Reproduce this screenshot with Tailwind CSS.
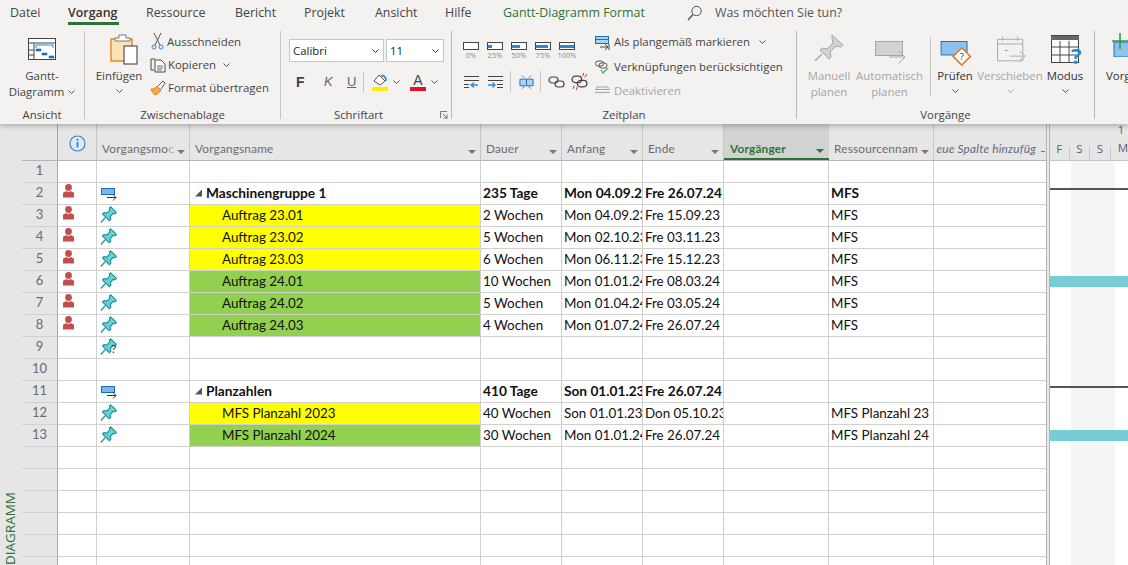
<!DOCTYPE html>
<html lang="de">
<head>
  <meta charset="UTF-8" />
  <title>Gantt-Diagramm</title>
  <script src="https://cdn.jsdelivr.net/npm/@tailwindcss/browser@4"></script>
</head>
<body class="w-[1128px] h-[565px] overflow-hidden bg-white text-[#444] font-['Open_Sans','Noto_Sans',sans-serif] text-[11.4px]">

  <!-- Ribbon tabs -->
  <div class="h-[124px] bg-[#f3f2f1] shadow-[0_2px_5px_rgba(0,0,0,0.25)] relative z-10">
    <nav class="h-[26px] flex text-[12.4px] text-[#444] leading-[26px]">
      <span class="ml-[10px] w-[58px]">Datei</span>
      <span class="w-[78px] relative"><span class="font-semibold text-[#333]">Vorgang</span><span class="absolute left-0 w-[51px] top-[22px] h-[3px] bg-[#2e7237]"></span></span>
      <span class="w-[89px]">Ressource</span>
      <span class="w-[69px]">Bericht</span>
      <span class="w-[71px]">Projekt</span>
      <span class="w-[70px]">Ansicht</span>
      <span class="w-[58px]">Hilfe</span>
      <span class="w-[184px] text-[#2e7237]">Gantt-Diagramm Format</span>
      <svg class="mt-[5px] w-[16px] h-[16px] mr-[12px]" viewBox="0 0 16 16" fill="none" stroke="#555" stroke-width="1"><circle cx="9.5" cy="6" r="4.7"/><path d="M6 9.5 1 15" stroke-width="1.4"/></svg>
      <span class="text-[#555]">Was möchten Sie tun?</span>
    </nav>

    <!-- Ribbon groups -->
    <div class="flex h-[88px] mt-[5px]">
      <!-- Ansicht -->
      <section class="w-[85px] border-r border-[#c8c6c4] flex flex-col items-center">
        <svg class="mt-[7px] w-[28px] h-[23px]" viewBox="0 0 28 23" fill="none"><rect x=".5" y=".5" width="27" height="21" fill="#fff" stroke="#444"/><path d="M0 5h28M6 5v17M0 12h6M0 17h6" stroke="#444"/><path d="M8 10V7h17v3" stroke="#2b88d8"/><path d="M8 11h5v2H8zM14 15h5v2h-5zM21 18h5v2h-5z" fill="#1e70b5" stroke="#1e70b5" stroke-width=".6"/></svg>
        <div class="mt-[7px] text-center leading-[16px]">Gantt-<br><span class="inline-flex items-center gap-[4px]">Diagramm <svg class="w-[7px] h-[4px]" viewBox="0 0 7 4" fill="none" stroke="#555"><path d="M.5.5l3 3 3-3"/></svg></span></div>
        <div class="mt-auto -mb-[3px] leading-[14px]">Ansicht</div>
      </section>

      <!-- Zwischenablage -->
      <section class="w-[196px] border-r border-[#c8c6c4] flex flex-col">
        <div class="flex flex-1">
          <div class="w-[65px] flex flex-col items-center pl-[3px]">
            <svg class="mt-[3px] ml-[10px] w-[28px] h-[31px]" viewBox="0 0 28 31" fill="none"><path d="M1 5h21v22H1z" fill="#fbe3b8" stroke="#ed8b1e" stroke-width="1.500"/><path d="M5 7h15V4h-4V1H9v3H5z" fill="#fff" stroke="#777"/><rect x="14" y="12" width="13" height="18" fill="#fff" stroke="#333"/></svg>
            <div class="mt-[3px] leading-[16px]">Einfügen</div>
            <svg class="mt-[5px] w-[7px] h-[4px]" viewBox="0 0 7 4" fill="none" stroke="#555"><path d="M.5.5l3 3 3-3"/></svg>
          </div>
          <div class="flex flex-col pt-[2px] gap-[7px] leading-[16px]">
            <div class="flex items-center gap-[2px]"><svg class="w-[15px] h-[17px]" viewBox="0 0 15 17" fill="none" stroke="#555"><path d="M4 0l6 12M11 0 5 12"/><circle cx="4" cy="14" r="2" stroke="#2b88d8"/><circle cx="11" cy="14" r="2" stroke="#2b88d8"/></svg>Ausschneiden</div>
            <div class="flex items-center gap-[2px]"><svg class="w-[16px] h-[16px]" viewBox="0 0 16 16" fill="none" stroke="#444"><path d="M5 2H1v11h3"/><path d="M5 3h6l4 4v8H5z" fill="#fff"/><path d="M7 9h6M7 11h6M7 13h5" stroke-width=".8"/></svg>Kopieren <svg class="ml-[5px] w-[7px] h-[4px]" viewBox="0 0 7 4" fill="none" stroke="#555"><path d="M.5.5l3 3 3-3"/></svg></div>
            <div class="flex items-center gap-[2px]"><svg class="w-[16px] h-[16px]" viewBox="0 0 16 16" fill="none"><path d="M1 9c3 0 5-1 6-3l4 4c-1 2-3 4-6 5-1-1-3-3-4-6z" fill="#f3a64b" stroke="#d97a14" stroke-width=".8"/><path d="M8 6l5-5 2 2-4 6" fill="#fff" stroke="#555"/></svg>Format übertragen</div>
          </div>
        </div>
        <div class="text-center leading-[14px] -mb-[3px]">Zwischenablage</div>
      </section>

      <!-- Schriftart -->
      <section class="w-[171px] border-r border-[#b9b7b5] flex flex-col pl-[8px]">
        <div class="flex gap-[2px] mt-[8px]">
          <div class="w-[95px] h-[23px] bg-white border border-[#c8c6c4] flex items-center justify-between pl-[3px] pr-[4px] text-[#222]">Calibri <svg class="w-[7px] h-[4px]" viewBox="0 0 7 4" fill="none" stroke="#333"><path d="M.5.5l3 3 3-3"/></svg></div>
          <div class="w-[58px] h-[23px] bg-white border border-[#c8c6c4] flex items-center justify-between pl-[3px] pr-[4px] text-[#222]">11 <svg class="w-[7px] h-[4px]" viewBox="0 0 7 4" fill="none" stroke="#333"><path d="M.5.5l3 3 3-3"/></svg></div>
        </div>
        <div class="flex items-center mt-[9px] h-[22px]">
          <span class="w-[24px] pl-[7px] font-bold text-[14px] font-['Liberation_Sans',sans-serif]">F</span>
          <span class="w-[24px] pl-[11px] italic text-[13px] text-[#666] font-['Liberation_Sans',sans-serif]">K</span>
          <span class="w-[26px] pl-[10px] underline text-[13px] text-[#666] font-['Liberation_Sans',sans-serif]">U</span>
          <span class="w-px h-[21px] bg-[#c8c6c4] mr-[8px]"></span>
          <span class="w-[16px] flex flex-col items-center"><svg class="w-[15px] h-[12px]" viewBox="0 0 15 12" fill="none"><path d="M1 7l5-6 6 6-5 4z" stroke="#555" fill="#fff"/><path d="M8 2c2-1 5 0 5 5" stroke="#2b88d8" stroke-width="1.600"/></svg><span class="w-[16px] h-[4px] bg-[#ffee00] mt-[1px]"></span></span>
          <svg class="ml-[5px] w-[7px] h-[4px]" viewBox="0 0 7 4" fill="none" stroke="#555"><path d="M.5.5l3 3 3-3"/></svg>
          <span class="ml-[10px] w-[16px] flex flex-col items-center leading-[12px]"><span class="text-[14px] font-['Liberation_Sans',sans-serif]">A</span><span class="w-[16px] h-[4px] bg-[#e81123] mt-[1px]"></span></span>
          <svg class="ml-[5px] w-[7px] h-[4px]" viewBox="0 0 7 4" fill="none" stroke="#555"><path d="M.5.5l3 3 3-3"/></svg>
        </div>
        <div class="mt-auto -mb-[3px] flex leading-[14px]">
          <span class="flex-1 text-center pr-[12px]">Schriftart</span>
          <svg class="w-[8px] h-[8px] mt-[3px] mr-[3px]" viewBox="0 0 9 9" fill="none" stroke="#666"><path d="M.5 8V.5H8"/><path d="M3 3l5 5M8 4v4H4"/></svg>
        </div>
      </section>

      <!-- Zeitplan -->
      <section class="w-[345px] border-r border-[#b9b7b5] flex flex-col pl-[11px]">
        <div class="flex flex-1">
          <div class="w-[132px] pt-[11px]">
            <div class="flex gap-[8px]" id="percent"></div>
            <div class="flex items-center mt-[11px]">
              <svg class="w-[16px] h-[14px]" viewBox="0 0 16 14" fill="none" stroke="#444"><path d="M1 1.500h15M1 5.500h15M1 9.500h5M1 12.500h5"/><path d="M15 10H8m3-2.500L8 10l3 2.500" stroke="#2b88d8" stroke-width="1.300"/></svg>
              <svg class="ml-[8px] w-[16px] h-[14px]" viewBox="0 0 16 14" fill="none" stroke="#444"><path d="M1 1.500h15M1 5.500h15M10 9.500h6M10 12.500h6"/><path d="M1 10h7M5.500 7.500 8 10l-2.500 2.500" stroke="#2b88d8" stroke-width="1.300"/></svg>
              <span class="ml-[7px] w-px h-[21px] bg-[#c8c6c4]"></span>
              <svg class="ml-[8px] w-[15px] h-[16px]" viewBox="0 0 16 16" fill="none"><path d="M1 5h7v7H1z" fill="#a9d3f2" stroke="#1e70b5"/><path d="M8 5h7v7H8z" fill="#a9d3f2" stroke="#1e70b5"/><path d="M3 1l3 3M13 1l-3 3M3 15l3-2M13 15l-3-2" stroke="#777"/></svg>
              <span class="ml-[6px] w-px h-[21px] bg-[#c8c6c4]"></span>
              <svg class="ml-[7px] w-[17px] h-[12px]" viewBox="0 0 17 12" fill="none" stroke="#444" stroke-width="1.200"><rect x="1" y="1" width="9" height="6" rx="3"/><rect x="7" y="5" width="9" height="6" rx="3"/></svg>
              <svg class="ml-[6px] w-[18px] h-[17px]" viewBox="0 0 17 16" fill="none" stroke="#444" stroke-width="1.200"><rect x="1" y="3" width="9" height="6" rx="3"/><rect x="6" y="7" width="9" height="6" rx="3"/><path d="M12 0l-1 3M15 1l-2 3M2 15l1-3M5 16l1-3" stroke="#e81123" stroke-width=".9"/></svg>
            </div>
          </div>
          <div class="flex flex-col pt-[3px] gap-[8.500px] leading-[16px]">
            <div class="flex items-center gap-[4px]"><svg class="w-[15px] h-[15px]" viewBox="0 0 15 15" fill="none"><rect x=".5" y="1.500" width="13" height="7" fill="#a9d3f2" stroke="#1e70b5"/><path d="M0 4.500h14" stroke="#1e70b5"/><path d="M5 12h8m-3-3 3 3-3 3M14 9v6" stroke="#444"/></svg>Als plangemäß markieren <svg class="ml-[5px] w-[7px] h-[4px]" viewBox="0 0 7 4" fill="none" stroke="#555"><path d="M.5.5l3 3 3-3"/></svg></div>
            <div class="flex items-center gap-[4px]"><svg class="w-[15px] h-[15px]" viewBox="0 0 15 15" fill="none"><rect x=".5" y="2" width="8" height="5" rx="2.500" stroke="#555"/><rect x="4" y="4" width="8" height="5" rx="2.500" stroke="#555"/><path d="M6 11l2 3 5-5" stroke="#4caf50" stroke-width="1.300"/></svg>Verknüpfungen berücksichtigen</div>
            <div class="flex items-center gap-[4px] text-[#a6a6a6]"><svg class="w-[15px] h-[15px]" viewBox="0 0 15 15" fill="none" stroke="#a6a6a6"><path d="M0 5.500h15M0 8.500h15M2 5.500V3h11v2"/></svg>Deaktivieren</div>
          </div>
        </div>
        <div class="-mb-[3px] leading-[14px] ml-[136px] w-[50px] text-center">Zeitplan</div>
      </section>

      <!-- Vorgänge -->
      <section class="w-[298px] border-r border-[#b9b7b5] flex flex-col">
        <div class="flex flex-1 text-center leading-[16px]">
          <div class="w-[64px] flex flex-col items-center text-[#a6a6a6]">
            <svg class="mt-[3px] w-[32px] h-[30px]" viewBox="0 0 32 30" fill="none"><path d="M19 1l11 10-2 2-5-1-6 6 1 5-2 2-9-9 2-2 5 1 6-6-1-5z" fill="#d2d2d2" stroke="#a6a6a6"/><path d="M9 20l-7 7" stroke="#a6a6a6" stroke-width="1.500"/></svg>
            <div class="mt-[4px]">Manuell<br>planen</div>
          </div>
          <div class="w-[57px] flex flex-col items-center text-[#a6a6a6]">
            <svg class="mt-[10px] ml-[3px] w-[32px] h-[24px] shrink-0" viewBox="0 0 32 24" fill="none"><rect x=".5" y=".5" width="27" height="14" fill="#d2d2d2" stroke="#a6a6a6"/><path d="M14 16h16m-6-6 6 6-6 6" stroke="#a6a6a6"/></svg>
            <div class="mt-[3px] whitespace-nowrap">Automatisch<br>planen</div>
          </div>
          <span class="ml-[12px] w-px h-[59px] bg-[#c8c6c4] mt-[6px]"></span>
          <div class="w-[48px] flex flex-col items-center">
            <svg class="mt-[10px] ml-[2px] w-[32px] h-[25px] shrink-0" viewBox="0 0 32 26" fill="none"><rect x=".5" y=".5" width="27" height="14" fill="#8fc1ee" stroke="#1e70b5"/><path d="M22 7l9 9-9 9-9-9z" fill="#fff" stroke="#e07a1f" stroke-width="1.600"/><text x="22" y="19.500" font-size="10" text-anchor="middle" fill="#333">?</text></svg>
            <div class="mt-[2px] text-[#333]">Prüfen</div>
            <svg class="mt-[5px] w-[7px] h-[4px]" viewBox="0 0 7 4" fill="none" stroke="#555"><path d="M.5.5l3 3 3-3"/></svg>
          </div>
          <div class="w-[62px] flex flex-col items-center text-[#a6a6a6]">
            <svg class="mt-[4px] ml-[3px] w-[30px] h-[31px] shrink-0" viewBox="0 0 32 30" fill="none" stroke="#a6a6a6"><path d="M.5 3h27v23H.5zM.5 8h27M6 0v5M22 0v5"/><path d="M14 21h16m-6-5 6 5-6 5" fill="#f3f2f1"/><path d="M9 15h2" stroke="#666"/></svg>
            <div class="mt-[2px] whitespace-nowrap">Verschieben</div>
            <svg class="mt-[5px] w-[7px] h-[4px]" viewBox="0 0 7 4" fill="none" stroke="#a6a6a6"><path d="M.5.5l3 3 3-3"/></svg>
          </div>
          <div class="w-[48px] flex flex-col items-center">
            <svg class="mt-[4px] ml-[4px] w-[32px] h-[30px] shrink-0" viewBox="0 0 32 30" fill="none" stroke="#444"><rect x=".5" y=".5" width="27" height="27" fill="#fff"/><path d="M0 3h28" stroke-width="4" stroke="#666"/><path d="M0 12h28M0 20h28M9 6v22M18 6v22"/><text x="20" y="29" font-size="22" fill="#2b88d8" stroke="none" font-weight="bold">?</text></svg>
            <div class="mt-[3px] text-[#333]">Modus</div>
            <svg class="mt-[5px] w-[7px] h-[4px]" viewBox="0 0 7 4" fill="none" stroke="#555"><path d="M.5.5l3 3 3-3"/></svg>
          </div>
        </div>
        <div class="-mb-[3px] leading-[14px] text-center">Vorgänge</div>
      </section>

      <!-- Einfügen (abgeschnitten) -->
      <section class="flex-1 overflow-hidden pl-[11px]">
        <svg class="mt-[2px] ml-[5px] w-[24px] h-[24px]" viewBox="0 0 24 24" fill="none"><rect x="3" y="9" width="21" height="15" fill="#8fc1ee" stroke="#1e70b5"/><path d="M9 0v16M1 8h16" stroke="#2e9e44" stroke-width="1.600"/></svg>
        <div class="mt-[11px] leading-[16px] text-[#333] whitespace-nowrap">Vorgang</div>
      </section>
    </div>
  </div>

  <!-- Sheet -->
  <div class="flex h-[441px]">
    <div class="w-[22px] bg-[#e6e6e6] relative overflow-hidden">
      <span class="absolute left-[3px] bottom-0 [writing-mode:vertical-rl] rotate-180 text-[13.5px] leading-[14px] text-[#2e7237]">DIAGRAMM</span>
    </div>
    <div class="w-[1024px]" id="table"></div>
    <div class="w-[4px] bg-[#e6e6e6] border-x border-[#b5b5b5]"></div>

    <!-- Gantt -->
    <div class="flex-1 relative overflow-hidden">
      <div class="h-[37px] bg-[#e6e6e6] flex items-end text-[11.5px] text-[#5f5f6f] font-['Open_Sans',sans-serif] border-b border-[#c8c6c4]">
        <span class="w-[21px] h-[13px] leading-[4px] text-center border-r border-[#c8c6c4]">F</span>
        <span class="w-[22px] h-[13px] leading-[4px] text-center border-r border-[#c8c6c4]">S</span>
        <span class="w-[22px] h-[13px] leading-[4px] text-center border-r border-[#c8c6c4]">S</span>
        <span class="pl-[7px] h-[36px] leading-[12px] whitespace-nowrap">1<span class="block mt-[6px]">M</span></span>
      </div>
      <div class="absolute left-[21px] top-[37px] bottom-0 w-[44px] bg-[#f5f5f5]"></div>
      <div class="absolute inset-x-0 top-[64px] h-[2px] bg-[#555]"></div>
      <div class="absolute inset-x-0 top-[262px] h-[2px] bg-[#555]"></div>
      <div class="absolute inset-x-0 top-[152px] h-[11px] bg-[#76cdd6]"></div>
      <div class="absolute inset-x-0 top-[306px] h-[11px] bg-[#76cdd6]"></div>
    </div>
  </div>

  <script>
    // Fortschritts-Symbole
    const percent = [["0%", "w-0"], ["25%", "w-[4px]"], ["50%", "w-[8px]"], ["75%", "w-[12px]"], ["100%", "w-[16px]"]];
    document.getElementById("percent").innerHTML = percent.map(([t, w]) => `
      <div class="w-[16px] flex flex-col items-center">
        <div class="w-[16px] h-[8px] border border-[#444] bg-white flex items-center"><div class="h-[3px] bg-[#2b88d8] ${w}"></div></div>
        <div class="text-[7.500px] leading-[9px] mt-[1px] text-[#888] whitespace-nowrap">${t}</div>
      </div>`).join("");

    const person = `<svg class="w-[11px] h-[14px]" viewBox="0 0 11 14"><circle cx="5.500" cy="3.500" r="3.400" fill="#c0504d"/><path d="M0 13.500V9.500C0 8 2 7.500 3.800 7 4.300 8.500 6.700 8.500 7.200 7 9 7.500 11 8 11 9.500v4z" fill="#c0504d"/></svg>`;
    const pin = `<svg class="w-[17px] h-[17px] mb-[2px]" viewBox="0 0 16 16"><path d="M10 .8 15.500 6 14.300 7.300 12.300 7 9.800 10 10.200 12.500 8.800 13.800 2.400 7.600 3.700 6.200 6.200 6.700 9.200 3.800 8.800 2z" fill="#66d0d4" stroke="#1f8c94"/><path d="M5 11 .8 15.500" stroke="#1f8c94" stroke-width="1.200"/></svg>`;
    const auto = `<svg class="ml-[1px] w-[16px] h-[13px] mt-[1px]" viewBox="0 0 16 13" fill="none"><rect x=".5" y=".5" width="13" height="6" fill="#7db5ef" stroke="#1e70b5"/><path d="M6 9.500h9m-3-3 3 3-3 3" stroke="#333"/></svg>`;
    const pinQ = `<span class="relative">${pin}<span class="absolute left-[11px] top-[4px] text-[12px] leading-[14px] text-[#333]">?</span></span>`;

    const Y = "bg-[#ffff00]", G = "bg-[#92d050]";
    const rows = [
      {},
      { p: 1, mode: auto, name: "Maschinengruppe 1", sum: 1, d: "235 Tage", a: "Mon 04.09.23", e: "Fre 26.07.24", r: "MFS" },
      { p: 1, mode: pin, name: "Auftrag 23.01", bg: Y, d: "2 Wochen", a: "Mon 04.09.23", e: "Fre 15.09.23", r: "MFS" },
      { p: 1, mode: pin, name: "Auftrag 23.02", bg: Y, d: "5 Wochen", a: "Mon 02.10.23", e: "Fre 03.11.23", r: "MFS" },
      { p: 1, mode: pin, name: "Auftrag 23.03", bg: Y, d: "6 Wochen", a: "Mon 06.11.23", e: "Fre 15.12.23", r: "MFS" },
      { p: 1, mode: pin, name: "Auftrag 24.01", bg: G, d: "10 Wochen", a: "Mon 01.01.24", e: "Fre 08.03.24", r: "MFS" },
      { p: 1, mode: pin, name: "Auftrag 24.02", bg: G, d: "5 Wochen", a: "Mon 01.04.24", e: "Fre 03.05.24", r: "MFS" },
      { p: 1, mode: pin, name: "Auftrag 24.03", bg: G, d: "4 Wochen", a: "Mon 01.07.24", e: "Fre 26.07.24", r: "MFS" },
      { mode: pinQ },
      {},
      { mode: auto, name: "Planzahlen", sum: 1, d: "410 Tage", a: "Son 01.01.23", e: "Fre 26.07.24" },
      { mode: pin, name: "MFS Planzahl 2023", bg: Y, d: "40 Wochen", a: "Son 01.01.23", e: "Don 05.10.23", r: "MFS Planzahl 23" },
      { mode: pin, name: "MFS Planzahl 2024", bg: G, d: "30 Wochen", a: "Mon 01.01.24", e: "Fre 26.07.24", r: "MFS Planzahl 24" },
      {}, {}, {}, {}, {}, {},
    ];

    const cell = "h-full border-r border-b border-[#d0d0d0] overflow-hidden whitespace-nowrap px-[2px] flex items-center";
    const cols = "grid grid-cols-[36px_39px_93px_291px_81px_81px_81px_105px_105px_112px]";
    const head = (t, extra = "") => `
      <div class="h-full border-r border-[#c8c6c4] flex items-end pb-[2px] pl-[5px] relative overflow-hidden whitespace-nowrap ${extra}">
        <span>${t}</span><span class="absolute right-[4px] bottom-[6px] w-0 h-0 border-x-[4px] border-x-transparent border-t-[4px] border-t-[#777]"></span>
      </div>`;

    let html = `<div class="${cols} h-[37px] bg-[#e6e6e6] border-b border-[#b5b5b5] text-[#6b6b6b] font-['Lato',sans-serif] text-[11.800px] tracking-[0.2px]">
      <div class="border-r border-[#a8a8a8]"></div>
      <div class="border-r border-[#c8c6c4] flex justify-center pt-[11px]"><svg class="w-[17px] h-[17px]" viewBox="0 0 17 17" fill="none"><circle cx="8.500" cy="8.500" r="7.500" stroke="#2b88d8" stroke-width="1.200"/><path d="M8.500 7v5.500" stroke="#2b88d8" stroke-width="1.800"/><circle cx="8.500" cy="4.800" r="1.100" fill="#2b88d8"/></svg></div>
      ${head("Vorgangsmo<span class='opacity-50'>c</span>")}
      ${head("Vorgangsname")}
      ${head("Dauer")}${head("Anfang")}${head("Ende")}
      <div class="h-full bg-[#d2d2d2] border-b-2 border-[#2e7237] flex items-end pl-[6px] relative font-bold text-[#2e7237] -mb-px">Vorgänger<span class="absolute right-[5px] bottom-[5px] w-0 h-0 border-x-[4px] border-x-transparent border-t-[4px] border-t-[#2e7237]"></span></div>
      ${head("Ressourcennam")}
      <div class="h-full flex items-end pb-[2px] justify-end pr-[10px] italic text-[#5f6b80] overflow-hidden whitespace-nowrap relative">eue Spalte hinzufüg<span class="absolute right-[1px] bottom-[8px] w-[4px] h-[1px] bg-[#777]"></span></div>
    </div>`;

    rows.forEach((r, i) => {
      const weight = r.sum ? "font-bold text-[13.700px] pb-[1px]" : "text-[13.400px] pb-[1px]";
      html += `<div class="${cols} h-[22px] leading-[20px] text-[#111] font-['Lato',sans-serif]">
        <div class="bg-[#e6e6e6] border-r border-r-[#a8a8a8] border-b border-b-[#d0d0d0] text-center text-[#6b6b6b] text-[13px] leading-[18px]">${i < 13 ? i + 1 : ""}</div>
        <div class="${cell} !items-start pl-[5px] pt-[1px]">${r.p ? person : ""}</div>
        <div class="${cell} pl-[3px]">${r.mode || ""}</div>
        <div class="${cell} ${r.bg || ""} ${r.sum ? "pl-[5px]" : "pl-[32px]"} ${weight}">
          ${r.sum ? `<span class="w-[7px] h-[7px] mr-[4px] bg-[#555] [clip-path:polygon(100%_0,100%_100%,0_100%)]"></span>` : ""}${r.name || ""}
        </div>
        <div class="${cell} ${weight}">${r.d || ""}</div>
        <div class="${cell} ${weight}">${r.a || ""}</div>
        <div class="${cell} ${weight}">${r.e || ""}</div>
        <div class="${cell}"></div>
        <div class="${cell} ${weight}">${r.r || ""}</div>
        <div class="${cell} border-r-0"></div>
      </div>`;
    });
    document.getElementById("table").innerHTML = html;
  </script>
</body>
</html>
